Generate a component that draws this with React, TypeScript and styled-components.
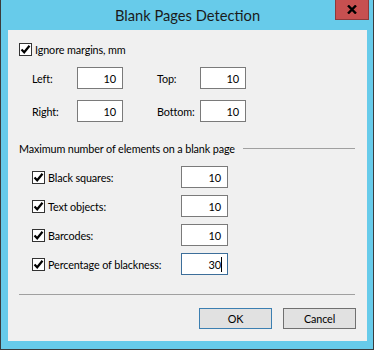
import React from 'react';
import styled, { createGlobalStyle } from 'styled-components';

const GlobalStyle = createGlobalStyle`
  html, body {
    margin: 0;
    padding: 0;
    background: #ffffff;
  }
  body {
    font-family: Lato, 'Noto Sans', sans-serif;
    font-size: 10.8px;
    letter-spacing: -0.12px;
    color: #000;
  }
`;

const Window = styled.div`
  box-sizing: border-box;
  width: 374px;
  height: 350px;
  background: #67cbea;
  border: 1px solid #3b3b3b;
  border-top: none;
  display: flex;
  flex-direction: column;
  position: relative;
`;

const TitleBar = styled.div`
  height: 30px;
  display: flex;
  align-items: center;
  justify-content: center;
  font-size: 14.7px;
  letter-spacing: 0;
  color: #1b1b1b;
  padding-left: 1px;
  padding-bottom: 1px;
  box-sizing: border-box;
`;

const CloseButton = styled.div`
  position: absolute;
  top: 0;
  left: 334px;
  width: 34px;
  height: 20px;
  box-sizing: border-box;
  background: #c75050;
  border: 1px solid #8d3a3a;
  border-top: none;
  display: flex;
  align-items: center;
  justify-content: center;
`;

const Client = styled.div`
  flex: 1;
  margin: 0 6px 8px 7px;
  background: #f0f0f0;
  padding: 13px 12px 0 11px;
  display: flex;
  flex-direction: column;
`;

const CheckRow = styled.label<{ $indent?: number }>`
  display: flex;
  align-items: center;
  gap: 3px;
  padding-left: ${(p) => p.$indent ?? 0}px;
  white-space: nowrap;
`;

const Box = styled.span`
  box-sizing: border-box;
  width: 13px;
  height: 13px;
  border: 1px solid #333333;
  background: #ffffff;
  display: inline-flex;
  align-items: center;
  justify-content: center;
`;

const MarginGrid = styled.div`
  display: grid;
  grid-template-columns: 45px 46px 34px 43px 46px;
  grid-auto-rows: 22px;
  row-gap: 11px;
  align-items: center;
  margin-top: 11px;
  padding-left: 13px;
`;

const Field = styled.div<{ $focused?: boolean }>`
  box-sizing: border-box;
  height: 22px;
  width: ${(p) => (p.$focused !== undefined ? 47 : 46)}px;
  background: #ffffff;
  border: 1px solid ${(p) => (p.$focused ? '#3c6e9a' : '#7a7a7a')};
  display: flex;
  align-items: center;
  justify-content: flex-end;
  padding-right: ${(p) => (p.$focused ? 5 : 6)}px;
  font-size: 11px;
`;

const Caret = styled.span`
  display: inline-block;
  width: 1px;
  height: 15px;
  background: #000;
`;

const GroupHeader = styled.div`
  display: flex;
  align-items: center;
  margin-top: 18px;
  height: 16px;
  white-space: nowrap;
`;

const GroupLine = styled.div`
  flex: 1;
  height: 1px;
  background: #a0a0a0;
  margin-left: 8px;
`;

const ElementList = styled.div`
  display: flex;
  flex-direction: column;
  gap: 7px;
  margin-top: 10px;
`;

const ElementRow = styled.div`
  display: grid;
  grid-template-columns: 162px 47px;
  align-items: center;
  height: 22px;
`;

const Separator = styled.div`
  height: 1px;
  background: #a0a0a0;
  margin-top: 19px;
`;

const ButtonBar = styled.div`
  display: flex;
  justify-content: flex-end;
  gap: 11px;
  margin-top: 13px;
  margin-right: -1px;
`;

const Button = styled.div<{ $default?: boolean }>`
  box-sizing: border-box;
  width: 73px;
  height: 21px;
  background: #e1e1e1;
  border: 1px solid ${(p) => (p.$default ? '#3c7fb1' : '#707070')};
  display: flex;
  align-items: center;
  justify-content: center;
`;

const Check = () => (
  <Box>
    <svg width="11" height="11" viewBox="0 0 11 11">
      <path d="M1.5 5.5 L4.2 8.3 L9.5 1.8" fill="none" stroke="#000" strokeWidth="2.2" />
    </svg>
  </Box>
);

const elements = [
  { label: 'Black squares:', value: '10' },
  { label: 'Text objects:', value: '10' },
  { label: 'Barcodes:', value: '10' },
  { label: 'Percentage of blackness:', value: '30', focused: true },
];

const App = () => {
  return (
    <>
      <GlobalStyle />
      <Window>
        <TitleBar>Blank Pages Detection</TitleBar>
        <CloseButton>
          <svg width="10" height="9" viewBox="0 0 10 9">
            <path d="M1 0.5 L9 8.5 M9 0.5 L1 8.5" stroke="#000" strokeWidth="2.4" />
          </svg>
        </CloseButton>
        <Client>
          <CheckRow>
            <Check />
            Ignore margins, mm
          </CheckRow>
          <MarginGrid>
            <span>Left:</span>
            <Field>10</Field>
            <span />
            <span>Top:</span>
            <Field>10</Field>
            <span>Right:</span>
            <Field>10</Field>
            <span />
            <span>Bottom:</span>
            <Field>10</Field>
          </MarginGrid>
          <GroupHeader>
            Maximum number of elements on a blank page
            <GroupLine />
          </GroupHeader>
          <ElementList>
            {elements.map((e) => (
              <ElementRow key={e.label}>
                <CheckRow $indent={13}>
                  <Check />
                  {e.label}
                </CheckRow>
                <Field $focused={!!e.focused}>
                  {e.value}
                  {e.focused && <Caret />}
                </Field>
              </ElementRow>
            ))}
          </ElementList>
          <Separator />
          <ButtonBar>
            <Button $default>OK</Button>
            <Button>Cancel</Button>
          </ButtonBar>
        </Client>
      </Window>
    </>
  );
};

export default App;
